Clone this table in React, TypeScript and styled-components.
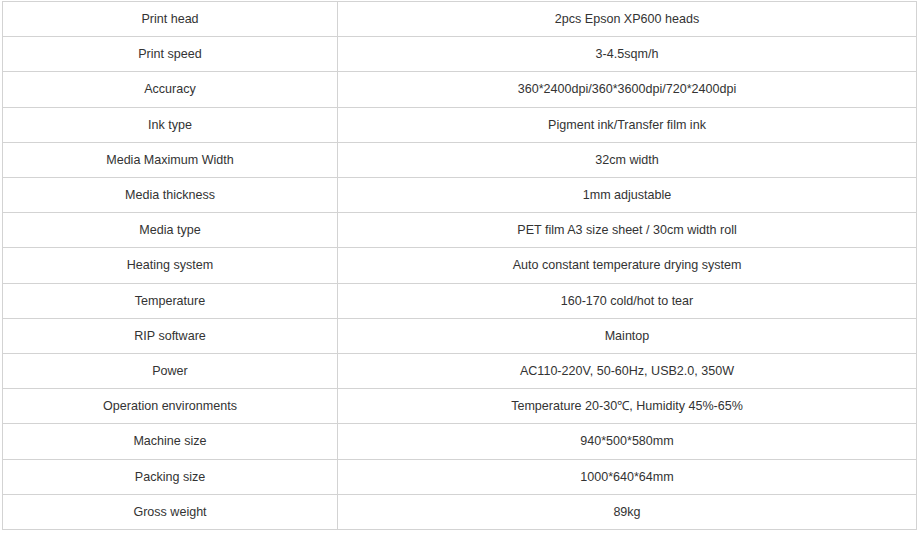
import React from "react";
import styled, { createGlobalStyle } from "styled-components";

const Global = createGlobalStyle`
  html, body { margin: 0; padding: 0; background: #fff; }
  * { box-sizing: border-box; }
`;

const Wrap = styled.div`
  padding: 1px 0 0 2px;
  font-family: "Liberation Sans", Arial, sans-serif;
`;

const Table = styled.table`
  width: 915px;
  border-collapse: collapse;
  table-layout: fixed;
`;

const Cell = styled.td<{ $label?: boolean }>`
  border: 1px solid #d3d3d3;
  padding: 8px;
  text-align: center;
  font-size: 12.55px;
  line-height: 18.2px;
  color: #333;
  width: ${(p) => (p.$label ? "335px" : "auto")};
`;

const rows: [string, string][] = [
  ["Print head", "2pcs Epson XP600 heads"],
  ["Print speed", "3-4.5sqm/h"],
  ["Accuracy", "360*2400dpi/360*3600dpi/720*2400dpi"],
  ["Ink type", "Pigment ink/Transfer film ink"],
  ["Media Maximum Width", "32cm width"],
  ["Media thickness", "1mm adjustable"],
  ["Media type", "PET film A3 size sheet / 30cm width roll"],
  ["Heating system", "Auto constant temperature drying system"],
  ["Temperature", "160-170 cold/hot to tear"],
  ["RIP software", "Maintop"],
  ["Power", "AC110-220V, 50-60Hz, USB2.0, 350W"],
  ["Operation environments", "Temperature 20-30\u2103, Humidity 45%-65%"],
  ["Machine size", "940*500*580mm"],
  ["Packing size", "1000*640*64mm"],
  ["Gross weight", "89kg"],
];

export default function App() {
  return (
    <Wrap>
      <Global />
      <Table>
        <tbody>
          {rows.map(([k, v]) => (
            <tr key={k}>
              <Cell $label>{k}</Cell>
              <Cell>{v}</Cell>
            </tr>
          ))}
        </tbody>
      </Table>
    </Wrap>
  );
}
